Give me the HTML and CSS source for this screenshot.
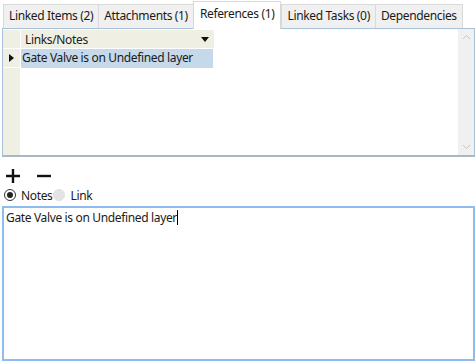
FILE: index.html
```html
<!DOCTYPE html>
<html lang="en">
<head>
  <meta charset="UTF-8" />
  <title>References</title>
  <link rel="stylesheet" href="styles.css">
</head>
<body>
  <div class="tabs">
    <div class="tab">Linked Items (2)</div>
    <div class="tab">Attachments (1)</div>
    <div class="tab active">References (1)</div>
    <div class="tab">Linked Tasks (0)</div>
    <div class="tab">Dependencies</div>
  </div>

  <div class="panel">
    <div class="grid">
      <div class="grid-head">
        <div class="row-head"></div>
        <div class="col-head">
          <span>Links/Notes</span>
          <span class="sort-arrow"></span>
        </div>
      </div>
      <div class="grid-row">
        <div class="row-head"><span class="row-arrow"></span></div>
        <div class="cell selected">Gate Valve is on Undefined layer</div>
      </div>
      <div class="grid-rest">
        <div class="row-head"></div>
      </div>
    </div>
    <div class="scrollbar">
      <svg width="9" height="6" viewBox="0 0 9 6"><path d="M1 5 L4.5 1.5 L8 5" fill="none" stroke="#c8c8c8" stroke-width="1"/></svg>
      <svg width="9" height="6" viewBox="0 0 9 6"><path d="M1 1 L4.5 4.5 L8 1" fill="none" stroke="#c8c8c8" stroke-width="1"/></svg>
    </div>
  </div>

  <div class="tools">
    <svg width="16" height="16" viewBox="0 0 16 16"><path d="M8 1 V15 M1 8 H15" stroke="#111" stroke-width="2.4"/></svg>
    <svg width="16" height="16" viewBox="0 0 16 16"><path d="M1 8 H15" stroke="#111" stroke-width="2.4"/></svg>
  </div>

  <div class="options">
    <label class="option"><span class="radio checked"></span>Notes</label>
    <label class="option"><span class="radio"></span>Link</label>
  </div>

  <div class="editor">Gate Valve is on Undefined layer<span class="caret"></span></div>
</body>
</html>
```

FILE: styles.css
```css
body {
  margin: 0;
  padding: 0;
  font-family: 'Noto Sans', 'Open Sans', sans-serif;
  font-size: 12px;
  letter-spacing: -0.35px;
  color: #1a1a1a;
  background-color: #fff;
  width: 476px;
  height: 362px;
  overflow: hidden;
}

.tabs {
  display: flex;
  align-items: flex-end;
  height: 28px;
  padding-left: 3px;
}

.tab {
  height: 23px;
  line-height: 22px;
  padding: 0 5px;
  margin-right: -1px;
  background-color: #f0f0f0;
  border: 1px solid #d9d9d9;
  border-bottom: none;
  white-space: nowrap;
}

.tab.active {
  position: relative;
  z-index: 1;
  height: 27px;
  line-height: 24px;
  padding: 0 6px;
  margin: 0 0 -1px 0;
  background-color: #fff;
}

.panel {
  display: flex;
  height: 126px;
  margin: 0 1px 0 2px;
  border: 1px solid #a7c1db;
  border-bottom: 2px solid #a9b6c4;
}

.grid {
  flex: 1;
  display: flex;
  flex-direction: column;
}

.grid-head,
.grid-row {
  display: flex;
  height: 19px;
}

.grid-head {
  margin-top: 1px;
}

.grid-rest {
  flex: 1;
  display: flex;
}

.row-head {
  width: 17px;
  background-color: #efefe4;
  border-bottom: 1px solid #fff;
  display: flex;
  align-items: center;
  justify-content: center;
}

.grid-rest .row-head {
  border-bottom: none;
}

.col-head {
  width: 184px;
  display: flex;
  align-items: center;
  justify-content: space-between;
  padding: 0 5px 0 4px;
  background-color: #efefe4;
  border-left: 1px solid #fff;
  border-bottom: 1px solid #fff;
  color: #222;
}

.sort-arrow {
  width: 0;
  height: 0;
  border-left: 4px solid transparent;
  border-right: 4px solid transparent;
  border-top: 5px solid #111;
}

.row-arrow {
  width: 0;
  height: 0;
  border-top: 4px solid transparent;
  border-bottom: 4px solid transparent;
  border-left: 5px solid #111;
}

.cell {
  width: 191px;
  padding-left: 1px;
  line-height: 18px;
  border-left: 1px solid #fff;
}

.cell.selected {
  background-color: #c5d9ea;
}

.scrollbar {
  width: 16px;
  background-color: #f0f0f0;
  display: flex;
  flex-direction: column;
  justify-content: space-between;
  align-items: center;
  padding: 5px 0;
}

.tools {
  display: flex;
  gap: 15px;
  padding: 11px 0 0 5px;
  height: 19px;
}

.options {
  display: flex;
  align-items: center;
  height: 16px;
  padding-left: 4px;
}

.option {
  display: flex;
  align-items: center;
  gap: 5px;
}

.radio {
  width: 10px;
  height: 10px;
  border: 1px solid #333;
  border-radius: 50%;
  position: relative;
}

.radio.checked::after {
  content: "";
  position: absolute;
  left: 2px;
  top: 2px;
  width: 6px;
  height: 6px;
  border-radius: 50%;
  background-color: #222;
}

.radio:not(.checked) {
  background-color: #e4e4e4;
  border-color: #e0e0e0;
}

.option + .option {
  margin-left: 1px;
}

.editor {
  height: 147px;
  margin: 3px 1px 0 2px;
  padding: 2px 2px;
  border: 2px solid #8ebcef;
  line-height: 16px;
}

.caret {
  display: inline-block;
  width: 1px;
  height: 15px;
  vertical-align: -3px;
  background-color: #000;
}
```
